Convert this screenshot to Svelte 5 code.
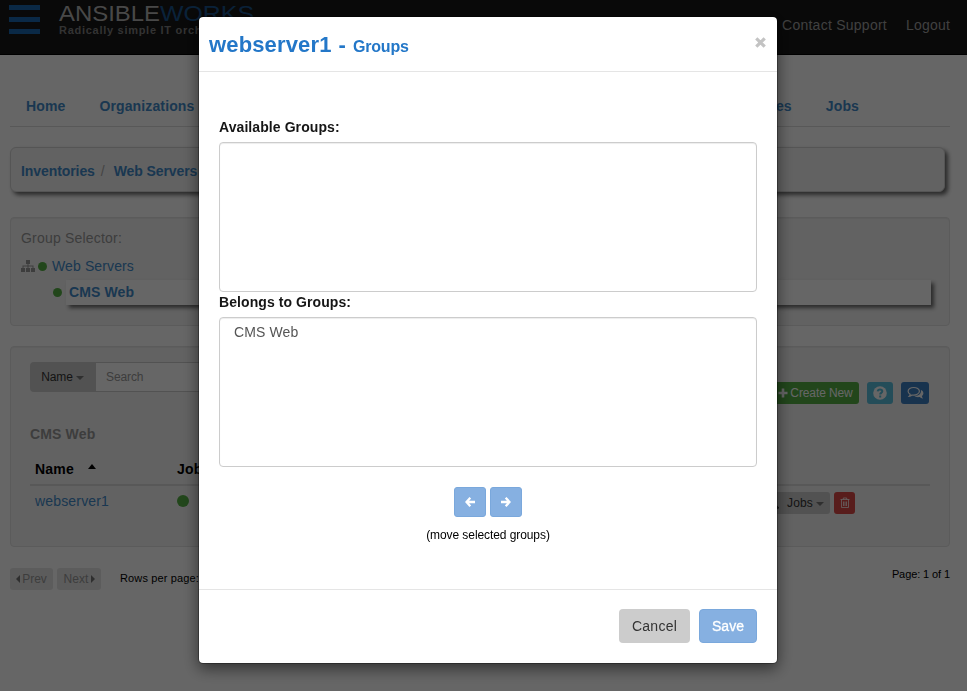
<script>
  const leftTabs = ['Home', 'Organizations', 'Users', 'Teams'];
  const rightTabs = ['Job Templates', 'Jobs'];
  const available = [];
  const belongs = ['CMS Web'];
</script>

<div class="page">
  <header>
    <div class="brand">
      <div class="bars"><i></i><i></i><i></i></div>
      <div class="logo">
        <svg width="200" height="24" viewBox="0 0 200 24" class="word">
          <text x="0" y="21" textLength="101" lengthAdjust="spacingAndGlyphs" fill="#b4b4b4">ANSIBLE</text>
          <text x="101" y="21" textLength="94" lengthAdjust="spacingAndGlyphs" fill="#1a5590">WORKS</text>
        </svg>
        <div class="tagline">Radically simple IT orchestration</div>
      </div>
    </div>
    <nav class="account"><a class="support" href="#support">Contact Support</a><a class="logout" href="#logout">Logout</a></nav>
  </header>

  <main>
    <nav class="tabs">
      <div>{#each leftTabs as tab}<a href="#tab">{tab}</a>{/each}</div>
      <div>{#each rightTabs as tab}<a href="#tab">{tab}</a>{/each}</div>
    </nav>

    <div class="crumbs"><a href="#inv">Inventories</a><span>/</span><a href="#web">Web Servers</a></div>

    <section class="well selector">
      <div class="caption">Group Selector:</div>
      <div class="node">
        <svg width="14" height="12" viewBox="0 0 14 12" fill="#999"><path d="M5 0h4v4H7.500v1.500H12.500V8H14v4h-4V8h1.500V6.500h-4V8H9v4H5V8h1.500V6.500h-4V8H4v4H0V8h1.500V5.500h5V4H5z" /></svg>
        <b class="dot"></b><a href="#web">Web Servers</a>
      </div>
      <div class="node child">
        <b class="dot"></b><div class="active"><a href="#cms">CMS Web</a></div>
      </div>
    </section>

    <section class="well hosts">
      <div class="toolbar">
        <div class="search"><button class="field">Name <i class="caret"></i></button><div class="input">Search</div></div>
        <div class="actions">
          <button class="create"><svg width="10" height="10" viewBox="0 0 10 10" fill="#fff"><path d="M3.700.5h2.600v3.200h3.200v2.600H6.300v3.200H3.700V6.300H.5V3.700h3.200z" /></svg><span>Create New</span></button>
          <button class="help" aria-label="Help"><svg width="14" height="14" viewBox="0 0 14 14"><circle cx="7" cy="7" r="6.800" fill="#fff" /><path d="M4.700 5.300C4.900 3.900 5.800 3.400 7 3.400s2.300.7 2.300 1.900c0 1.600-2.100 1.500-2.100 3.100M7.200 9.500v2" fill="none" stroke="#5bc0de" stroke-width="2" /></svg></button>
          <button class="chat" aria-label="Activity"><svg width="17" height="14" viewBox="0 0 17 14"><path d="M13.900 4c1.600.7 2.500 1.800 2.500 3.200 0 1.100-.6 2-1.500 2.700 0 .9.500 1.700 1.200 2.500-1.400.1-2.500-.5-3.400-1.400-2.200.4-4.300 0-5.700-1.200 4.500.4 7.500-1.900 6.900-5.800z" fill="#fff" /><path d="M6.700 1.500C3.500 1.500 1.100 3.100 1.100 5.300c0 1.300.8 2.400 2.100 3.100-.1.700-.5 1.300-1.100 1.900 1.100 0 2.200-.6 3-1.300 3.900.6 7.300-1.200 7.300-3.700C12.400 3.100 9.800 1.500 6.700 1.500z" fill="none" stroke="#fff" stroke-width="1.200" /></svg></button>
        </div>
      </div>
      <h5>CMS Web</h5>
      <div class="thead"><span class="c1">Name <i class="up"></i></span><span>Job Status</span></div>
      <div class="row">
        <a class="c1" href="#host">webserver1</a><b class="dot big"></b>
        <div class="rowactions"><button class="jobs"><svg width="11" height="11" viewBox="0 0 11 11" fill="none" stroke="#333"><circle cx="4.500" cy="4.500" r="3.500" stroke-width="1.600" /><path d="M7 7l3.500 3.500" stroke-width="2.200" /></svg><span>Jobs</span><i class="caret"></i></button><button class="trash" aria-label="Delete"><svg width="10" height="12" viewBox="0 0 10 12" fill="none" stroke="#fff" stroke-opacity=".85"><path d="M.5 2.500h9M3.300 2.500V1h3.400v1.500M1.500 2.500v8h7v-8M3.500 4.500v4.500M5 4.500v4.500M6.500 4.500v4.500" stroke-width=".9" /></svg></button></div>
      </div>
    </section>

    <footer class="pager">
      <button class="prev"><i class="tri left"></i>Prev</button><button class="next">Next<i class="tri right"></i></button>
      <span class="rows">Rows per page:</span><span class="count">Page: 1 of 1</span>
    </footer>
  </main>
</div>

<div class="backdrop">
  <div class="modal">
    <div class="mhead"><h3>webserver1 - <small>Groups</small></h3>
      <svg width="11" height="11" viewBox="0 0 11 11"><path d="M1.300 1.300l8.400 8.400M9.700 1.300L1.300 9.700" stroke="#c3c3c3" stroke-width="3.200" /></svg>
    </div>
    <div class="mbody">
      <div class="label">Available Groups:</div>
      <div class="list">{#each available as g}<div>{g}</div>{/each}</div>
      <div class="label">Belongs to Groups:</div>
      <div class="list">{#each belongs as g}<div>{g}</div>{/each}</div>
      <div class="move">
        <button aria-label="Move left"><svg width="10" height="10" viewBox="0 0 10 10" fill="none" stroke="#fff" stroke-width="2.300"><path d="M5.300.8L1.500 5l3.800 4.200M1.500 5H10" /></svg></button>
        <button aria-label="Move right"><svg width="10" height="10" viewBox="0 0 10 10" fill="none" stroke="#fff" stroke-width="2.300"><path d="M4.700.8L8.500 5 4.700 9.200M8.500 5H0" /></svg></button>
      </div>
      <div class="hint">(move selected groups)</div>
    </div>
    <div class="mfoot"><button class="cancel">Cancel</button><button class="save">Save</button></div>
  </div>
</div>

<style>
  :global(body) { overflow: hidden; }
  * { box-sizing: border-box; }
  .page, .backdrop { font: 14px/20px "Liberation Sans", Arial, sans-serif; color: #000; }
  .page { height: 691px; background: #fff; overflow: hidden; }
  a { color: #428bca; text-decoration: none; }
  button { font: inherit; border: 0; padding: 0; margin: 0; display: flex; align-items: center; justify-content: center; white-space: nowrap; }
  svg { display: block; flex: none; }
  header { height: 55px; background: #171717; border-bottom: 1px solid #000; display: flex; justify-content: space-between; }
  .brand { display: flex; padding-left: 9px; }
  .bars { width: 50px; padding-top: 5px; display: flex; flex-direction: column; gap: 7px; }
  .bars i { width: 31px; height: 5px; background: #1a66b0; }
  .word { font: 22px "Liberation Sans", Arial, sans-serif; overflow: visible; }
  .tagline { font: bold 11px/13px "Liberation Sans", Arial, sans-serif; color: #808080; letter-spacing: .72px; }
  .account { display: flex; padding: 15px 17px 0 0; gap: 19px; }
  .account a { color: #a0a0a0; }
  .support { letter-spacing: .25px; }
  .logout { letter-spacing: .2px; }
  main { padding: 0 17px 0 10px; }
  .tabs { height: 72px; border-bottom: 1px solid #ddd; display: flex; justify-content: space-between; padding: 41px 91px 0 16px; font-weight: bold; letter-spacing: .13px; }
  .tabs div { display: flex; gap: 34px; }
  .crumbs { height: 45px; margin: 20px 5px 0 0; border: 1px solid #d4d4d4; border-radius: 6px; background: #f5f5f5; box-shadow: 3px 3px 4px #6c6c6c; padding: 13px 10px; font-weight: bold; letter-spacing: -.08px; }
  .crumbs span { color: #aaa; font-weight: normal; padding: 0 9px 0 6px; }
  .well { background: #f5f5f5; border: 1px solid #e3e3e3; border-radius: 4px; box-shadow: inset 0 1px 1px rgba(0,0,0,.05); }
  .selector { margin-top: 25px; height: 109px; padding: 10px; letter-spacing: .12px; }
  .caption { color: #999; letter-spacing: .2px; }
  .node { display: flex; align-items: center; margin-top: 8px; height: 20px; }
  .node svg { margin-top: -1px; }
  .dot { width: 9px; height: 9px; border-radius: 50%; background: #55b045; flex: none; margin: 0 5px 0 3px; }
  .node.child { margin-top: 3px; height: 26px; padding-left: 29px; }
  .active { flex: 1; height: 25px; line-height: 25px; margin: 0 8px 0 0; padding-left: 3px; font-weight: bold; background: #fff; box-shadow: 3px 3px 4px #6c6c6c; }
  .child .dot { margin-right: 4px; }
  .hosts { margin-top: 20px; height: 201px; padding: 15px 19px; }
  .toolbar { height: 42px; display: flex; justify-content: space-between; }
  .search { display: flex; height: 30px; font-size: 12px; }
  .field { width: 65px; flex: none; background: #ccc; border-radius: 4px 0 0 4px; color: #333; gap: 3px; letter-spacing: -.1px; }
  .input { width: 180px; border: 1px solid #ccc; background: #fff; color: #999; padding: 4px 10px; letter-spacing: -.1px; }
  .caret { border: 4px solid transparent; border-top-color: #777; border-bottom: 0; margin-top: 2px; }
  .actions { display: flex; gap: 8px; padding: 20px 1px 0 0; }
  .actions button { height: 22px; border-radius: 3px; font-size: 12px; color: #fff; }
  .create { width: 87px; gap: 2px; background: #55b045; letter-spacing: -.1px; }
  .help { width: 26px; background: #5bc0de; }
  .chat { width: 28px; background: #3d7fc4; }
  h5 { margin: 20px 0 0; font-size: 14px; color: #999; letter-spacing: .15px; }
  .thead { margin-top: 15px; height: 27px; display: flex; padding-left: 5px; font-weight: bold; border-bottom: 2px solid #ddd; letter-spacing: .2px; }
  .c1 { width: 142px; flex: none; }
  .up { display: inline-block; border: 4.500px solid transparent; border-bottom: 5px solid #000; border-top: 0; margin: 0 0 5px 10px; }
  .row { display: flex; padding: 5px 0 0 5px; height: 35px; letter-spacing: .17px; }
  .big { width: 12px; height: 12px; margin: 4px 0; }
  .rowactions { display: flex; gap: 4px; margin: 1px 75px 0 auto; letter-spacing: 0; }
  .rowactions button { height: 22px; border-radius: 3px; font-size: 12px; }
  .jobs { width: 66px; justify-content: flex-end; padding-right: 6px; background: #ccc; color: #333; gap: 3px; }
  .jobs span { letter-spacing: .15px; }
  .jobs svg { margin-right: 5px; }
  .trash { width: 21px; background: #dc4a46; }
  .pager { display: flex; padding-top: 21px; font-size: 11px; }
  .pager button { height: 22px; font-size: 12px; color: #999; background: #e6e6e6; border-radius: 3px; gap: 2px; }
  .prev { width: 43px; }
  .next { width: 44px; margin-left: 4px; letter-spacing: .1px; }
  .tri { border: 4px solid transparent; }
  .left { border-right-color: #777; border-left: 0; }
  .right { border-left-color: #777; border-right: 0; }
  .rows { margin-left: 19px; letter-spacing: .14px; }
  .count { margin: -4px 0 0 auto; letter-spacing: -.1px; }
  .backdrop { position: fixed; inset: 0; background: rgba(0,0,0,.6); }
  .modal { width: 580px; height: 648px; margin: 16px 0 0 198px; background: #fff; background-clip: padding-box; border: 1px solid rgba(0,0,0,.3); border-radius: 5px; box-shadow: 0 5px 15px rgba(0,0,0,.5); }
  .mhead { height: 55px; border-bottom: 1px solid #e5e5e5; display: flex; justify-content: space-between; padding: 17px 11px 0 10px; }
  .mhead svg { margin-top: 3px; }
  h3 { margin: 0; font-size: 22px; line-height: 22px; color: #2377c8; letter-spacing: .15px; word-spacing: .7px; }
  h3 small { font-size: 16px; letter-spacing: -.2px; }
  .mbody { height: 517px; padding: 45px 20px 0; }
  .label { height: 25px; font-weight: bold; line-height: 20px; color: #161616; letter-spacing: .08px; }
  .list { height: 150px; border: 1px solid #ccc; border-radius: 4px; padding: 4px 14px; color: #555; box-shadow: inset 0 1px 1px rgba(0,0,0,.075); letter-spacing: .12px; }
  .move { display: flex; justify-content: center; gap: 4px; margin-top: 20px; }
  .move button { width: 32px; height: 30px; background: #86b0e1; border: 1px solid #7aa8dc; border-radius: 3px; }
  .hint { margin-top: 8px; text-align: center; font-size: 12px; letter-spacing: -.08px; }
  .mfoot { border-top: 1px solid #e5e5e5; display: flex; justify-content: flex-end; padding: 19px 20px 0; gap: 9px; }
  .mfoot button { height: 34px; border-radius: 4px; }
  .cancel { width: 71px; background: #ccc; color: #333; letter-spacing: .25px; }
  .save { width: 58px; background: #86b0e1; border: 1px solid #7aa8dc; color: #fff; -webkit-text-stroke: .3px #fff; }
</style>
